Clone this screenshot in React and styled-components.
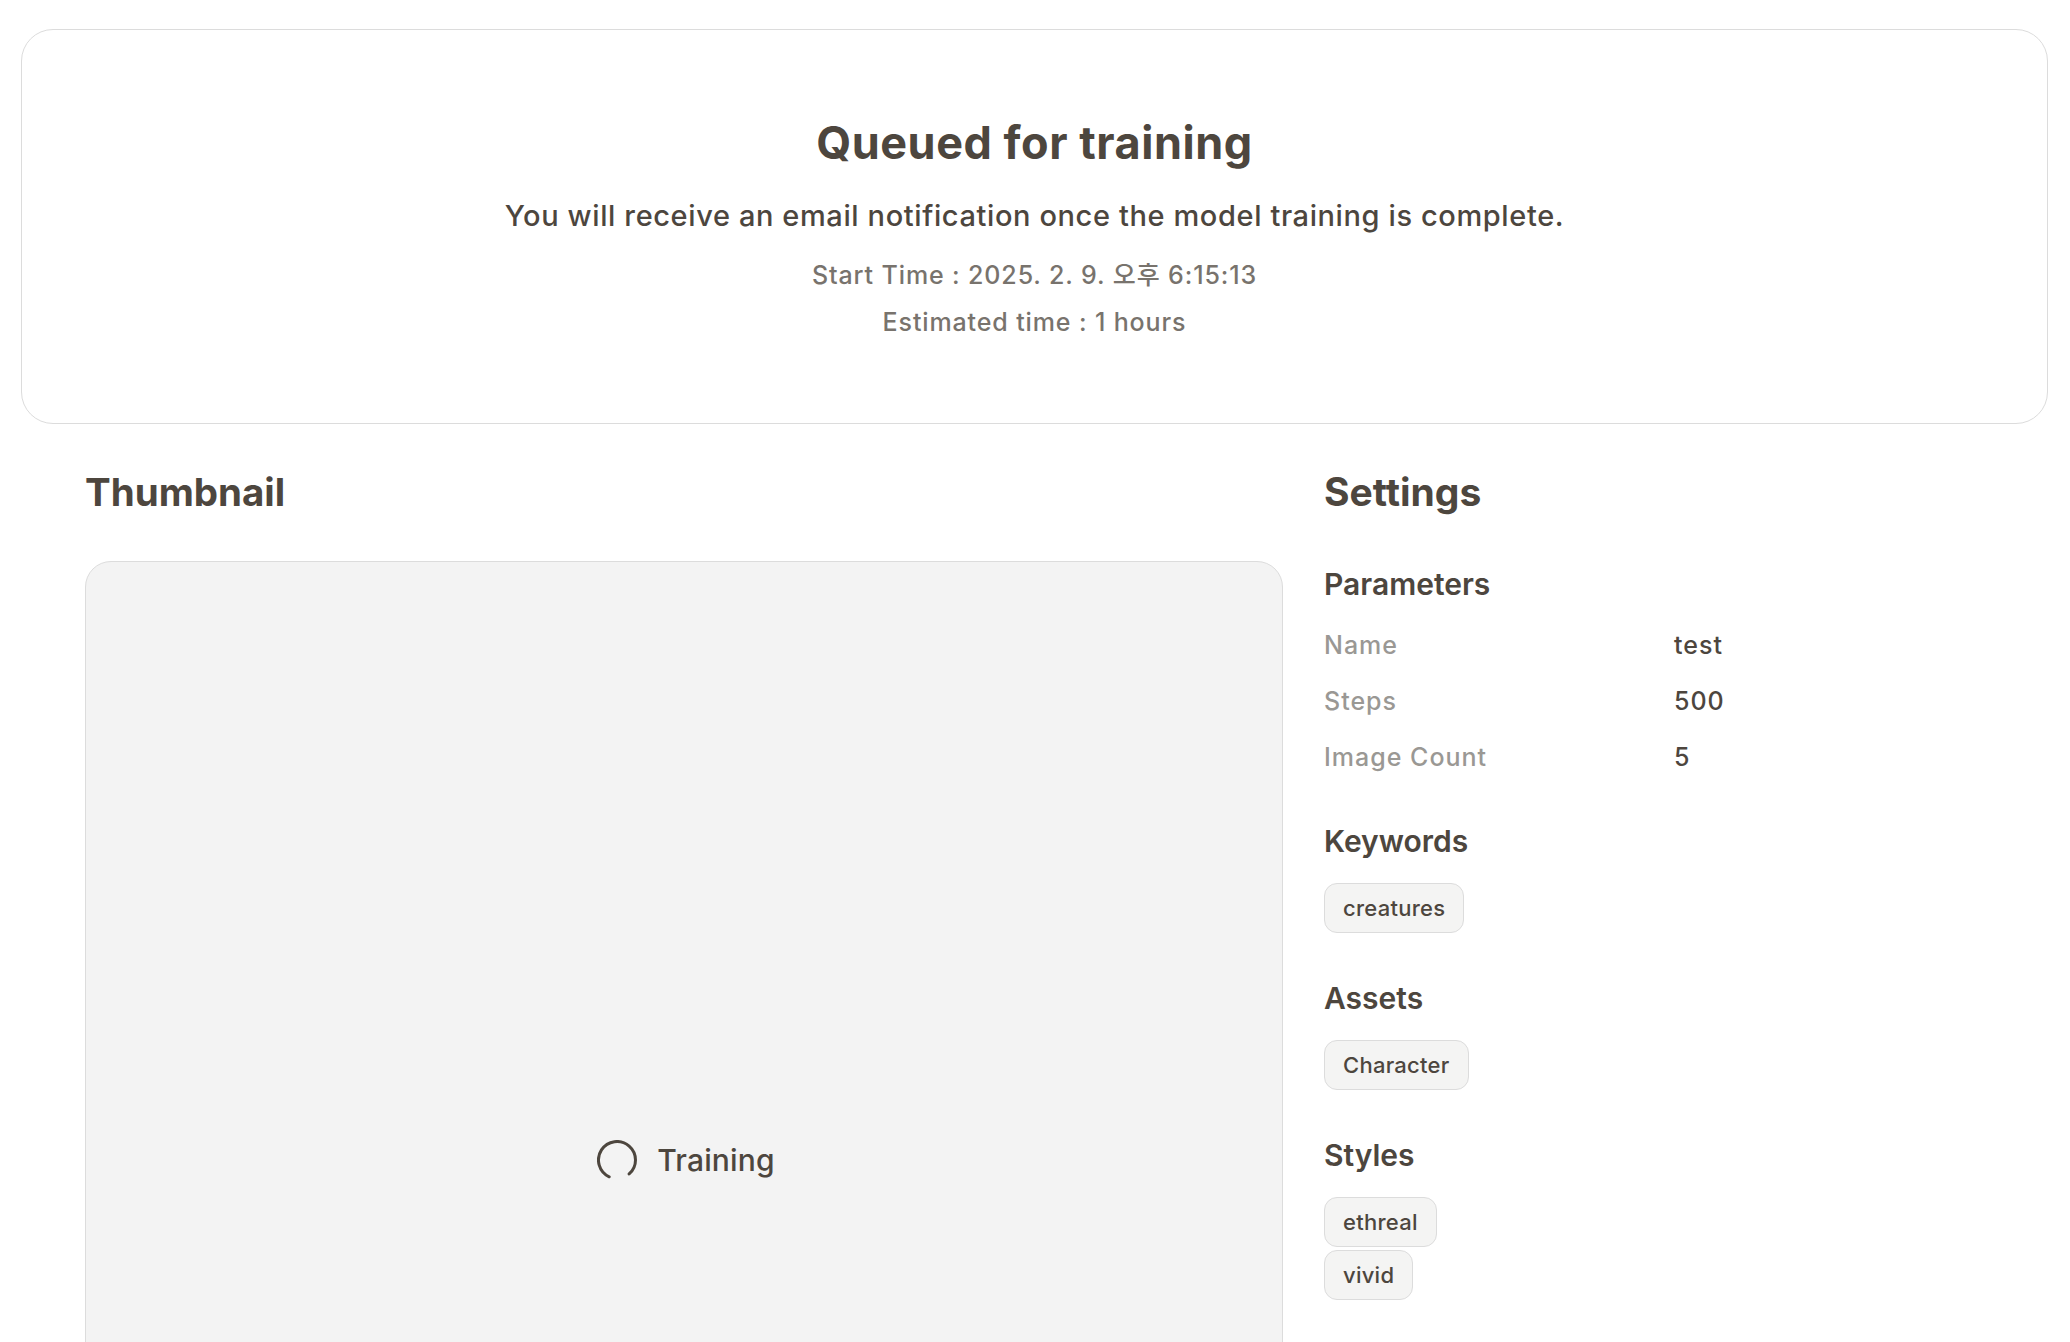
import React from "react";
import styled, { createGlobalStyle } from "styled-components";

const GlobalStyle = createGlobalStyle`
  html, body { margin: 0; padding: 0; background: #ffffff; }
  body {
    font-family: Inter, "Noto Sans CJK KR", "Noto Sans", sans-serif;
    color: #4d463e;
    -webkit-font-smoothing: antialiased;
  }
  * { box-sizing: border-box; }
`;

const Page = styled.div`
  padding: 29px 22px 40px 21px;
`;

const StatusCard = styled.section`
  border: 1.5px solid #dcdcdc;
  border-radius: 32px;
  padding: 86px 24px 86px;
  display: flex;
  flex-direction: column;
  align-items: center;
  text-align: center;
`;

const StatusTitle = styled.h1`
  margin: 0;
  font-size: 45px;
  line-height: 53px;
  font-weight: 700;
  letter-spacing: 0.012em;
  color: #4d463e;
`;

const StatusText = styled.p`
  margin: 30px 0 0;
  font-size: 29px;
  line-height: 34px;
  font-weight: 500;
  letter-spacing: 0.021em;
  color: #4d463e;
`;

const StatusMeta = styled.p`
  margin: ${(p) => p.$gap}px 0 0;
  font-size: 25px;
  line-height: 29px;
  font-weight: 500;
  letter-spacing: 0.035em;
  color: #78736d;
`;

const Main = styled.main`
  display: grid;
  grid-template-columns: 1fr 660px;
  column-gap: 41px;
  padding: 45px 64px 0;
`;

const Column = styled.div`
  display: flex;
  flex-direction: column;
  min-width: 0;
`;

const SectionTitle = styled.h2`
  margin: 0;
  font-size: ${(p) => p.$size || 39}px;
  line-height: 46px;
  font-weight: 700;
  color: #4d463e;
`;

const ThumbBox = styled.div`
  margin-top: 46px;
  width: 100%;
  aspect-ratio: 1 / 1;
  background: #f3f3f3;
  border: 1.5px solid #dcdcdc;
  border-radius: 26px;
  display: flex;
  align-items: center;
  justify-content: center;
  gap: 20px;
  padding-left: 4px;
`;

const TrainingLabel = styled.span`
  font-size: 30px;
  font-weight: 500;
  letter-spacing: 0.005em;
  color: #4d463e;
`;

const Spinner = styled.svg`
  width: 40px;
  height: 40px;
  flex: none;
`;

const Group = styled.div`
  display: flex;
  flex-direction: column;
  margin-top: ${(p) => p.$top}px;
`;

const GroupTitle = styled.h3`
  margin: 0;
  font-size: 30px;
  line-height: 36px;
  font-weight: 600;
  color: #4d463e;
`;

const ParamList = styled.dl`
  margin: 29px 0 0;
  display: flex;
  flex-direction: column;
  gap: 27px;
`;

const ParamRow = styled.div`
  display: grid;
  grid-template-columns: 350px 1fr;
  font-size: 25px;
  line-height: 29px;
  letter-spacing: 0.04em;
`;

const ParamLabel = styled.dt`
  margin: 0;
  color: #9a9894;
  font-weight: 500;
`;

const ParamValue = styled.dd`
  margin: 0;
  color: #4d463e;
  font-weight: 500;
`;

const ChipList = styled.div`
  margin-top: 24px;
  display: flex;
  flex-direction: column;
  align-items: flex-start;
  gap: 3px;
`;

const Chip = styled.span`
  display: inline-flex;
  align-items: center;
  height: 50px;
  padding: 0 18px;
  background: #f4f4f3;
  border: 1.5px solid #dcdcdc;
  border-radius: 13px;
  font-size: 22px;
  font-weight: 500;
  letter-spacing: 0.012em;
  color: #4d463e;
`;

const params = [
  ["Name", "test"],
  ["Steps", "500"],
  ["Image Count", "5"],
];

const groups = [
  { title: "Keywords", items: ["creatures"] },
  { title: "Assets", items: ["Character"] },
  { title: "Styles", items: ["ethreal", "vivid"] },
];

export default function App() {
  return (
    <>
      <GlobalStyle />
      <Page>
        <StatusCard>
          <StatusTitle>Queued for training</StatusTitle>
          <StatusText>
            You will receive an email notification once the model training is complete.
          </StatusText>
          <StatusMeta $gap={28}>Start Time : 2025. 2. 9. 오후 6:15:13</StatusMeta>
          <StatusMeta $gap={18}>Estimated time : 1 hours</StatusMeta>
        </StatusCard>
        <Main>
          <Column>
            <SectionTitle $size={38.5}>Thumbnail</SectionTitle>
            <ThumbBox>
              <Spinner viewBox="0 0 40 40" fill="none">
                <path
                  d="M12.18 36.77 A18.5 18.5 0 1 1 32.14 33.96"
                  stroke="#4d463e"
                  strokeWidth="3"
                  strokeLinecap="round"
                />
              </Spinner>
              <TrainingLabel>Training</TrainingLabel>
            </ThumbBox>
          </Column>
          <Column>
            <SectionTitle>Settings</SectionTitle>
            <Group $top={51}>
              <GroupTitle>Parameters</GroupTitle>
              <ParamList>
                {params.map(([k, v]) => (
                  <ParamRow key={k}>
                    <ParamLabel>{k}</ParamLabel>
                    <ParamValue>{v}</ParamValue>
                  </ParamRow>
                ))}
              </ParamList>
            </Group>
            {groups.map((g) => (
              <Group key={g.title} $top={g.title === "Keywords" ? 51 : 47}>
                <GroupTitle>{g.title}</GroupTitle>
                <ChipList>
                  {g.items.map((i) => (
                    <Chip key={i}>{i}</Chip>
                  ))}
                </ChipList>
              </Group>
            ))}
          </Column>
        </Main>
      </Page>
    </>
  );
}
